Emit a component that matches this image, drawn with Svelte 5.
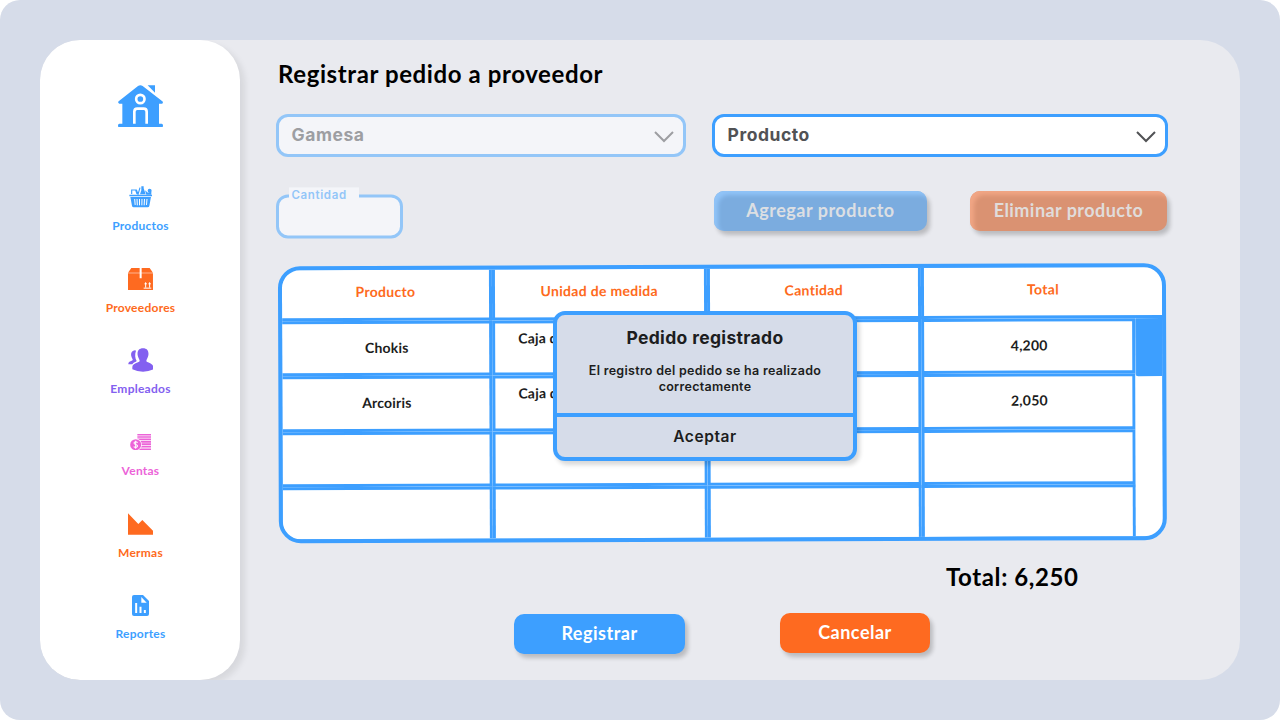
<script>
  const nav = [
    { id: 'productos', label: 'Productos', color: '#3d9fff' },
    { id: 'proveedores', label: 'Proveedores', color: '#fe6a20' },
    { id: 'empleados', label: 'Empleados', color: '#8360f0' },
    { id: 'ventas', label: 'Ventas', color: '#ec63d8' },
    { id: 'mermas', label: 'Mermas', color: '#fe6a20' },
    { id: 'reportes', label: 'Reportes', color: '#3d9fff' }
  ];
  const rows = [
    ['Chokis', 'Caja de', '', '4,200'],
    ['Arcoiris', 'Caja de', '', '2,050'],
    ['', '', '', ''],
    ['', '', '', '']
  ];
</script>

<div class="screen">
  <div class="panel">
    <aside>
      <svg class="home" viewBox="84 44 135 128" width="45" height="42.7">
        <g fill="#3d9fff">
          <path d="M144 47Q151 43 158 47L217 93Q221 97 216 100H207V160H215Q219 160 219 165.500T215 171H88Q84 171 84 165.500T88 160H97V100H88Q82 97 86 93Z" />
          <path d="M173 45H195V67Z" />
        </g>
        <circle cx="151" cy="86" r="12.500" fill="none" stroke="#fff" stroke-width="8" />
        <path d="M133 160V124Q133 115 142 115H161Q170 115 170 124V160" fill="none" stroke="#fff" stroke-width="8" />
      </svg>
      <nav>
        {#each nav as n}
          <a href="#{n.id}" style:color={n.color}>
            <span class="ico">
              {#if n.id === 'productos'}
                <svg viewBox="117 347 69 64" width="23" height="21.3" fill="currentColor">
                  <path d="M118 373H186V378H118ZM121 380H183L178 407Q177 411 173 411H131Q127 411 126 407Z" />
                  <path d="M134 386L135.500 404M141 386L142 405M148.500 386V405M156 386L155.500 405M163.500 386L162.500 405M171 386L169.500 404" stroke="#fff" stroke-width="3" />
                  <path d="M125 371V359H137L141 371M139 358L144 372L150 352" fill="none" stroke="currentColor" stroke-width="3.500" />
                  <path d="M154 348H161V354L167 372H150L154 360Z" />
                  <circle cx="179" cy="361" r="6" />
                  <path d="M165 360L174 367L184 364V373H169Z" />
                </svg>
              {:else if n.id === 'proveedores'}
                <svg viewBox="114 42 76 66" width="25.300" height="22" fill="currentColor">
                  <path d="M124 42H149V56H114ZM155 42H179L189 56H155ZM114 57.500H149V73H155V57.500H189V108H114Z" />
                  <path d="M161 102.500H184M167 101V88M179 101V88" stroke="#fff" stroke-width="3" fill="none" />
                  <path d="M162.500 91L167 84L171.500 91ZM174.500 91L179 84L183.500 91Z" fill="#fff" />
                </svg>
              {:else if n.id === 'empleados'}
                <svg viewBox="113 278 77 71" width="25.700" height="23.700" fill="currentColor">
                  <path d="M134 285C124 286 121 294 123 303C124 309 128 311 127 315C122 318 114 318 114 327H126C129 321 137 320 139 317C134 308 133 297 137 286Z" />
                  <path d="M158 279C145 279 140 288 142 300C143 307 147 311 148 316C149 323 127 322 126 335V342Q140 349 158 349T189 342V335C188 322 167 323 168 316C169 311 173 307 174 300C176 288 171 279 158 279Z" />
                </svg>
              {:else if n.id === 'ventas'}
                <svg viewBox="119 39 65 50" width="21.700" height="16.700">
                  <path d="M141 41H183M141 48H183M141 55H183M148 62.500H183M150 69.500H183M150 77H183M143 85H183" stroke="currentColor" stroke-width="5" />
                  <circle cx="136" cy="71" r="18.500" fill="#fff" />
                  <circle cx="136" cy="71" r="16.500" fill="currentColor" />
                  <path d="M142 65Q136 60 131.500 64.500Q130 69 136 70.500Q143 72.500 141 77Q136 82 130 76.500M136 59V83" fill="none" stroke="#fff" stroke-width="3" />
                </svg>
              {:else if n.id === 'mermas'}
                <svg viewBox="114 276 75 66" width="25" height="22" fill="currentColor">
                  <path d="M114 277L145 309L157 297L189 329V341H114Z" />
                </svg>
              {:else}
                <svg viewBox="126 522 51 63" width="17" height="21" fill="currentColor">
                  <path d="M132 522H159L177 540V579Q177 585 171 585H132Q126 585 126 579V528Q126 522 132 522Z" />
                  <path d="M154 528V545H170Z" fill="#fff" />
                  <path d="M138.500 546V576M151.500 557V576M164.500 567V576" stroke="#fff" stroke-width="6" />
                </svg>
              {/if}
            </span>
            <span class="lbl">{n.label}</span>
          </a>
        {/each}
      </nav>
    </aside>

    <main>
      <h1>Registrar pedido a proveedor</h1>

      <div class="selects">
        <div class="select off">
          <span>Gamesa</span>
          <svg width="20" height="12" viewBox="0 0 20 12"><path d="M1 1L10 10L19 1" /></svg>
        </div>
        <div class="select second">
          <span>Producto</span>
          <svg width="20" height="12" viewBox="0 0 20 12"><path d="M1 1L10 10L19 1" /></svg>
        </div>
      </div>

      <div class="tools">
        <div class="qty"><span>Cantidad</span></div>
        <button class="add">Agregar producto</button>
        <button class="del">Eliminar producto</button>
      </div>

      <div class="table">
        <div class="th first">Producto</div>
        <div class="th">Unidad de medida</div>
        <div class="th">Cantidad</div>
        <div class="th last">Total</div>
        {#each rows as r, i}
          <div class="td first" class:end={i === 3}>{r[0]}</div>
          <div class="td unit" class:end={i === 3}>{r[1]}</div>
          <div class="td" class:end={i === 3}>{r[2]}</div>
          <div class="td" class:end={i === 3}>{r[3]}</div>
        {/each}
        <div class="scroll"><div class="thumb"></div></div>
      </div>

      <div class="sum">Total: 6,250</div>

      <div class="actions">
        <button class="ok">Registrar</button>
        <button class="cancel">Cancelar</button>
      </div>
    </main>
  </div>

  <div class="modal">
    <div class="msg">
      <h2>Pedido registrado</h2>
      <p>El registro del pedido se ha realizado correctamente</p>
    </div>
    <div class="accept">Aceptar</div>
  </div>
</div>

<style>
  :global(body) { background: #fff; }
  * { box-sizing: border-box; }
  .screen {
    position: relative;
    width: 1280px;
    height: 720px;
    padding: 40px;
    background: #d6dce9;
    border-radius: 20px;
    overflow: hidden;
    font-family: Lato, sans-serif;
    font-weight: 700;
  }
  .panel {
    display: flex;
    height: 640px;
    background: #e9eaef;
    border-radius: 40px;
    overflow: hidden;
  }
  aside {
    width: 200px;
    height: 640px;
    flex: none;
    background: #fff;
    border-radius: 40px;
    box-shadow: 5px 4px 6px rgba(0, 0, 0, 0.08);
    display: flex;
    flex-direction: column;
    align-items: center;
    padding-top: 44.500px;
  }
  .home { flex: none; margin-left: 1px; }
  nav { margin-top: 55.800px; width: 100%; }
  a {
    display: flex;
    flex-direction: column;
    align-items: center;
    gap: 6px;
    height: 81.650px;
    text-decoration: none;
  }
  .ico { height: 28px; display: flex; align-items: center; margin-left: 1px; }
  .lbl { font-size: 12px; line-height: 18px; letter-spacing: 0.25px; margin-left: 1px; }
  main {
    flex: 1;
    padding: 20px 0 0 36px;
    display: flex;
    flex-direction: column;
    align-items: flex-start;
  }
  h1 {
    margin: 0 0 26px 2px;
    font-size: 24px;
    line-height: 28px;
    font-weight: 700;
    color: #000;
    letter-spacing: 0.6px;
  }
  .selects { display: flex; gap: 26px; }
  .select {
    width: 410px;
    height: 43px;
    border: 3px solid #3d9fff;
    border-radius: 12px;
    background: #fff;
    display: flex;
    align-items: center;
    justify-content: space-between;
    padding: 0 9.500px 0 12.500px;
    font-family: Inter, sans-serif;
    font-size: 17.500px;
    font-weight: 650;
    letter-spacing: 0.55px;
    color: #515255;
  }
  .select span { line-height: 20px; padding-bottom: 1px; }
  .select svg { margin-top: 2px; fill: none; stroke: #515255; stroke-width: 2; }
  .second { width: 456px; }
  .off { border-color: #93c6f8; background: #f4f5f9; color: #9d9ea2; }
  .off svg { stroke: #9d9ea2; }
  .tools { display: flex; margin-top: 34px; height: 48px; align-items: flex-start; }
  .qty {
    width: 127px;
    height: 44px;
    margin: 3px 310.600px 0 0.400px;
    transform: translateY(0.400px);
    border: 3px solid #93c6f8;
    border-radius: 12px;
    background: #f4f5f9;
  }
  .qty span {
    display: block;
    width: 70px;
    height: 13px;
    margin: -10.500px 0 0 10px;
    padding-left: 2px;
    background: #f4f5f9;
    color: #93c6f8;
    font: 600 11.500px/17px Inter, sans-serif;
    letter-spacing: 0.65px;
  }
  button {
    height: 40px;
    padding: 0 0 2px;
    border: 0;
    border-radius: 10px;
    font: 700 18px/22px Lato, sans-serif;
    letter-spacing: 0.5px;
    color: #fff;
    box-shadow: 3px 4px 4px rgba(0, 0, 0, 0.2);
  }
  .add {
    width: 213px;
    background: #7bacdf;
    color: #dcdfe3;
    box-shadow: 3px 4px 4px rgba(0, 0, 0, 0.2), inset 4px 4px 4px #91c4f8;
  }
  .del {
    width: 197px;
    margin-left: 43px;
    background: #da9272;
    color: #e0dcdb;
    letter-spacing: 0.45px;
    box-shadow: 3px 4px 4px rgba(0, 0, 0, 0.2), inset 4px 4px 4px #f1a685;
  }
  .table {
    width: 888px;
    height: 276.600px;
    margin: 25px 0 0 2px;
    border: 4px solid #3d9fff;
    border-radius: 22px;
    background: #6ab6ff;
    overflow: hidden;
    transform: translate(0.400px, 0.700px) rotate(-0.21deg);
    display: grid;
    grid-template-columns: 210px 214.500px 214.500px 214px 27px;
    grid-template-rows: 50.500px 55px 56px 55px 52.100px;
    font-size: 14px;
    flex: none;
  }
  .th, .td {
    border: 3px solid #3d9fff;
    background: #fff;
    display: flex;
    align-items: center;
    justify-content: center;
    padding-bottom: 3px;
  }
  .th { border-top: 0; color: #fe6a20; letter-spacing: 0.3px; }
  .td { color: #1c1d20; letter-spacing: 0.2px; padding: 0 0 2px 2px; }
  .th { padding-bottom: 4px; }
  .unit { justify-content: flex-start; align-items: flex-start; padding: 6px 0 0 23px; }
  .first { border-left: 0; }
  .last { grid-column: 4 / 6; border-right: 0; }
  .end { border-bottom: 0; }
  .scroll { grid-column: 5; grid-row: 2 / 6; background: #fff; }
  .thumb {
    height: 58px;
    background: #3d9fff;
    border-left: 1px solid #57acff;
    border-bottom-left-radius: 3px;
  }
  .sum {
    margin: 22.400px 0 0 670px;
    font-size: 24px;
    line-height: 28px;
    letter-spacing: 0.6px;
    color: #000;
  }
  .actions { display: flex; margin: 22px 0 0 238px; }
  .ok { width: 171px; background: #3d9fff; margin-top: 1px; }
  .cancel { width: 150px; background: #fe6a20; margin-left: 95px; }
  .modal {
    position: absolute;
    left: 553px;
    top: 311px;
    width: 304px;
    height: 150px;
    border: 4px solid #3d9fff;
    border-radius: 12px;
    background: #d6dce9;
    box-shadow: 3px 4px 4px rgba(0, 0, 0, 0.15);
    font-family: Inter, sans-serif;
    color: #1c1d20;
    text-align: center;
  }
  .msg { height: 102px; border-bottom: 4px solid #3d9fff; padding: 12px 24px 0; }
  h2 { margin: 0; font-size: 17.500px; line-height: 22px; font-weight: 650; letter-spacing: 0.35px; }
  p { margin: 14px 0 0; font-size: 12.500px; line-height: 16px; font-weight: 600; letter-spacing: 0.29px; }
  .accept { font-size: 15.500px; line-height: 40px; font-weight: 600; letter-spacing: 0.6px; }
</style>
